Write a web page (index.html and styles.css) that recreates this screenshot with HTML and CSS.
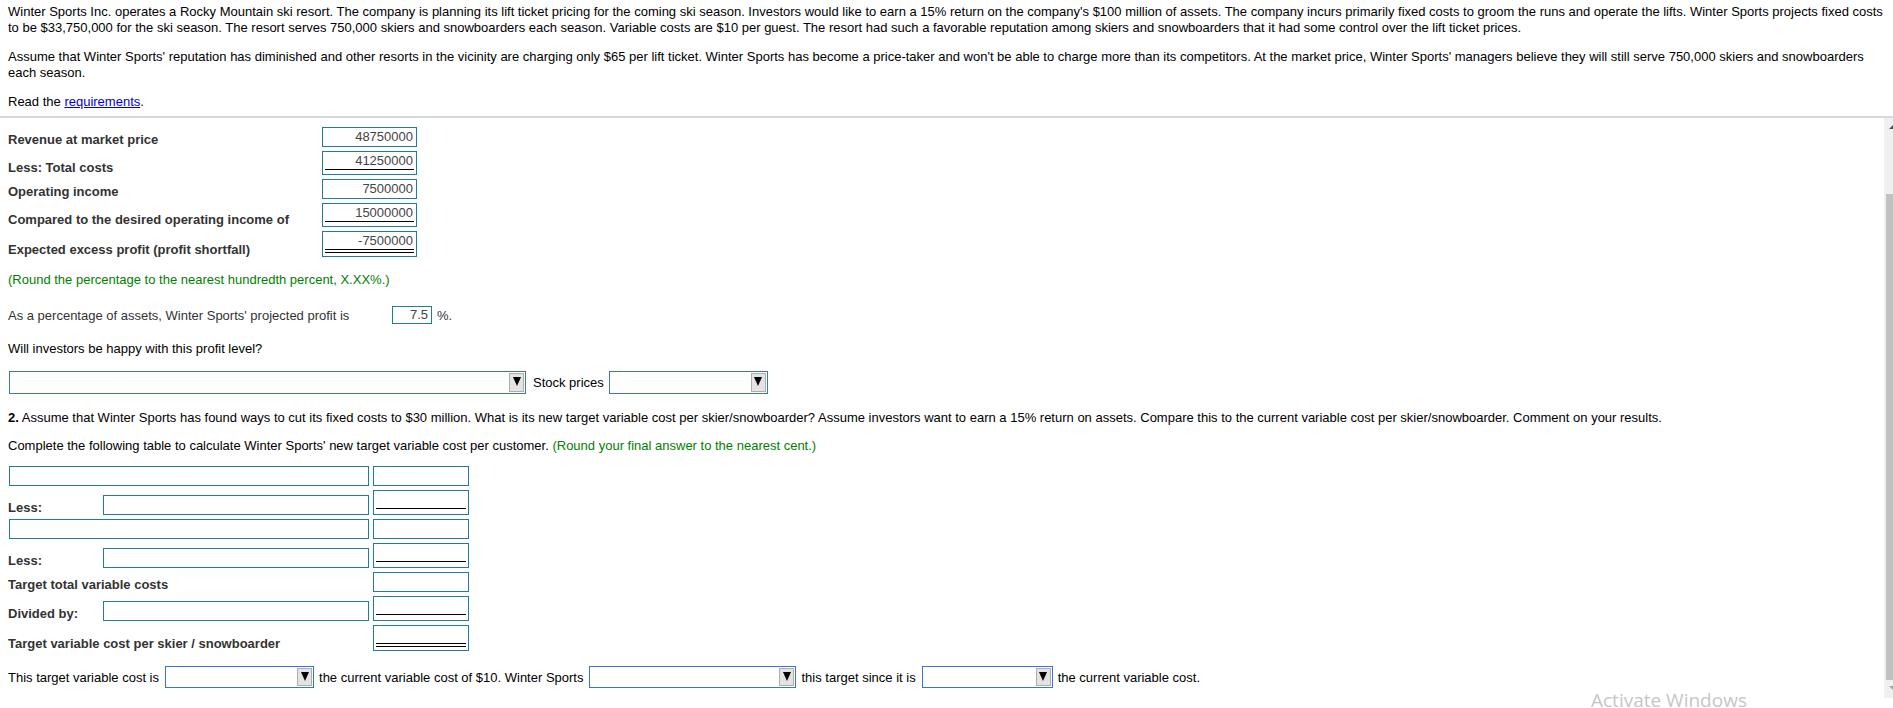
FILE: index.html
```html
<!DOCTYPE html>
<html lang="en">
<head>
<meta charset="utf-8">
<title>Winter Sports</title>
<link rel="stylesheet" href="styles.css">
</head>
<body>
<div class="page">
  <section class="intro">
    <p>Winter Sports Inc. operates a Rocky Mountain ski resort. The company is planning its lift ticket pricing for the coming ski season. Investors would like to earn a 15% return on the company's $100 million of assets. The company incurs primarily fixed costs to groom the runs and operate the lifts. Winter Sports projects fixed costs to be $33,750,000 for the ski season. The resort serves 750,000 skiers and snowboarders each season. Variable costs are $10 per guest. The resort had such a favorable reputation among skiers and snowboarders that it had some control over the lift ticket prices.</p>
    <p>Assume that Winter Sports' reputation has diminished and other resorts in the vicinity are charging only $65 per lift ticket. Winter Sports has become a price-taker and won't be able to charge more than its competitors. At the market price, Winter Sports' managers believe they will still serve 750,000 skiers and snowboarders each season.</p>
    <p>Read the <a href="#" class="link">requirements</a>.</p>
  </section>

  <div class="pane">
    <div class="content">
      <div class="ledger top">
        <span class="lbl">Revenue at market price</span>
        <span class="amt"><span class="v">48750000</span></span>

        <span class="lbl">Less: Total costs</span>
        <span class="amt u"><span class="v">41250000</span></span>

        <span class="lbl">Operating income</span>
        <span class="amt"><span class="v">7500000</span></span>

        <span class="lbl">Compared to the desired operating income of</span>
        <span class="amt u"><span class="v">15000000</span></span>

        <span class="lbl">Expected excess profit (profit shortfall)</span>
        <span class="amt dbl"><span class="v">-7500000</span></span>
      </div>

      <p class="note first-note">(Round the percentage to the nearest hundredth percent, X.XX%.)</p>

      <div class="pct-row">
        <span class="pct-lbl">As a percentage of assets, Winter Sports' projected profit is</span>
        <span class="amt pct"><span class="v">7.5</span></span>
        <span class="pct-sign">%.</span>
      </div>

      <p class="q">Will investors be happy with this profit level?</p>

      <div class="sel-row">
        <span class="dd dd-a"><span class="dd-btn"></span></span>
        <span class="txt">Stock prices</span>
        <span class="dd dd-b"><span class="dd-btn"></span></span>
      </div>

      <p class="q2"><b>2.</b> Assume that Winter Sports has found ways to cut its fixed costs to $30 million. What is its new target variable cost per skier/snowboarder? Assume investors want to earn a 15% return on assets. Compare this to the current variable cost per skier/snowboarder. Comment on your results.</p>

      <p class="q3">Complete the following table to calculate Winter Sports' new target variable cost per customer. <span class="note">(Round your final answer to the nearest cent.)</span></p>

      <div class="ledger bot">
        <span class="field wide"></span>
        <span class="amt"><span class="v"></span></span>

        <span class="lbl">Less:</span>
        <span class="field"></span>
        <span class="amt u"><span class="v"></span></span>

        <span class="field wide"></span>
        <span class="amt"><span class="v"></span></span>

        <span class="lbl">Less:</span>
        <span class="field"></span>
        <span class="amt u"><span class="v"></span></span>

        <span class="lbl span2">Target total variable costs</span>
        <span class="amt"><span class="v"></span></span>

        <span class="lbl">Divided by:</span>
        <span class="field"></span>
        <span class="amt u"><span class="v"></span></span>

        <span class="lbl span2">Target variable cost per skier / snowboarder</span>
        <span class="amt dbl"><span class="v"></span></span>
      </div>

      <div class="sentence">
        <span class="txt">This target variable cost is</span>
        <span class="dd dd-1"><span class="dd-btn"></span></span>
        <span class="txt">the current variable cost of $10. Winter Sports</span>
        <span class="dd dd-2"><span class="dd-btn"></span></span>
        <span class="txt">this target since it is</span>
        <span class="dd dd-3"><span class="dd-btn"></span></span>
        <span class="txt">the current variable cost.</span>
      </div>
    </div>

    <div class="scrollbar">
      <div class="sb-btn sb-up"></div>
      <div class="sb-track"></div>
      <div class="sb-thumb"></div>
      <div class="sb-btn sb-down"></div>
    </div>
  </div>
</div>
<div class="watermark">Activate Windows</div>
</body>
</html>
```
FILE: styles.css
```css
* { box-sizing: border-box; }

html, body {
  margin: 0;
  padding: 0;
  background: #fff;
}

body {
  width: 1893px;
  height: 708px;
  overflow: hidden;
  position: relative;
  font-family: "Liberation Sans", Arial, sans-serif;
  font-size: 13px;
  color: #000;
}

p { margin: 0; }

/* ---------- intro ---------- */
.intro {
  padding: 4px 5px 6px 8px;
  border-bottom: 2px solid #d3d9e4;
  line-height: 16px;
}
.intro p { margin-bottom: 13px; }
.intro p:last-child { margin-bottom: 0; }
.link { color: #0000ee; text-decoration: underline; }

/* ---------- scroll pane ---------- */
.pane {
  display: flex;
  height: 580px;
}
.content {
  flex: 1;
  padding: 9px 0 0 8px;
  overflow: hidden;
  line-height: 15px;
}

/* ---------- ledgers ---------- */
.ledger {
  display: grid;
  row-gap: 4px;
  align-items: end;
}
.ledger.top { grid-template-columns: 314px 95px; }
.ledger.bot {
  grid-template-columns: 91px 266px 96px;
  column-gap: 4px;
  margin-top: 13px;
}

.lbl {
  font-weight: bold;
  color: #333;
  line-height: 15px;
  white-space: nowrap;
}
.span2 { grid-column: 1 / span 2; }

.amt {
  display: block;
  height: 20px;
  border: 1px solid #1f7c9e;
  padding: 1px 2px 0;
  text-align: right;
  color: #444;
  background: #fff;
}
.amt .v {
  display: block;
  height: 15px;
  line-height: 15px;
  padding-right: 1px;
}
.amt.u { height: 24px; }
.amt.u .v {
  height: 17px;
  padding-bottom: 1px;
  border-bottom: 1px solid #000;
}
.amt.dbl { height: 26px; }
.amt.dbl .v {
  height: 20px;
  padding-bottom: 1px;
  border-bottom: 4px double #000;
}
.bot .amt.u { height: 25px; }

.field {
  display: block;
  height: 20px;
  border: 1px solid #1f7c9e;
  background: #fff;
}
.field.wide {
  grid-column: 1 / span 2;
  margin-left: 1px;
}

/* ---------- notes & questions ---------- */
.note { color: #008000; }
.first-note { margin-top: 15px; }

.pct-row {
  display: flex;
  align-items: center;
  height: 18px;
  margin-top: 19px;
  color: #333;
}
.pct-lbl { width: 384px; }
.amt.pct {
  width: 40px;
  height: 18px;
  padding-top: 0;
}
.pct-sign { margin-left: 5px; }

.q { margin-top: 17px; }

.sel-row {
  display: flex;
  align-items: center;
  margin-top: 15px;
  height: 23px;
}
.sel-row .txt { margin: 0 5px 0 7px; }

.q2 { margin-top: 16px; }
.q3 { margin-top: 13px; }

/* ---------- dropdowns ---------- */
.dd {
  display: flex;
  justify-content: flex-end;
  height: 23px;
  border: 1px solid #3a72d4;
  background: #fff;
  padding: 1px;
}
.dd-btn {
  display: flex;
  justify-content: center;
  width: 15px;
  background: #e3e3e3;
  border: 1px solid #adadad;
  padding-top: 3px;
}
.dd-btn::before {
  content: "";
  width: 0;
  height: 0;
  border-left: 4px solid transparent;
  border-right: 4px solid transparent;
  border-top: 9px solid #000;
}
.dd-a { width: 517px; margin-left: 1px; }
.dd-b { width: 159px; }

.sentence {
  display: flex;
  align-items: center;
  gap: 5px;
  height: 22px;
  margin-top: 15px;
}
.sentence .dd { height: 22px; }
.dd-1 { width: 149px; margin-left: 1px; }
.dd-2 { width: 207px; margin-left: 1px; }
.dd-3 { width: 131px; margin-left: 1px; }

/* ---------- scrollbar ---------- */
.scrollbar {
  width: 9px;
  display: flex;
  flex-direction: column;
  background: #f0f0f0;
  overflow: hidden;
}
.sb-btn { height: 17px; flex: none; }
.sb-down { height: 18px; }
.sb-up::before {
  content: "";
  display: block;
  width: 0;
  height: 0;
  margin: 7px 0 0 5px;
  border-left: 4px solid transparent;
  border-right: 4px solid transparent;
  border-bottom: 4px solid #505050;
}
.sb-down::before {
  content: "";
  display: block;
  width: 0;
  height: 0;
  margin: 6px 0 0 5px;
  border-left: 4px solid transparent;
  border-right: 4px solid transparent;
  border-top: 4px solid #a3a3a3;
}
.sb-track { flex: 1; }
.sb-thumb {
  flex: none;
  height: 486px;
  margin-left: 2px;
  background: #c1c1c1;
}

/* ---------- OS overlay ---------- */
.watermark {
  position: absolute;
  left: 1591px;
  top: 691px;
  font-family: "Open Sans", "Noto Sans", sans-serif;
  font-size: 19px;
  line-height: 19px;
  color: #c6c6c6;
  white-space: nowrap;
}
```
